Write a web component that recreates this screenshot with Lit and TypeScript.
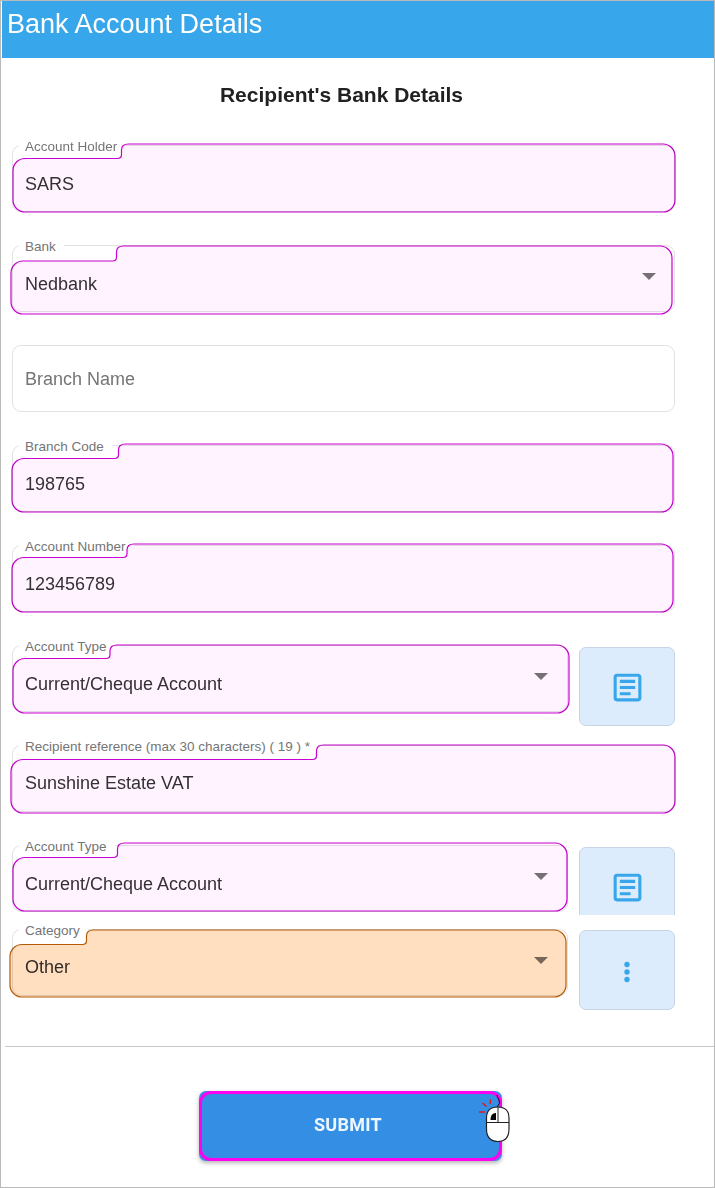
import { LitElement, html, css, svg, nothing } from "lit";
import { customElement } from "lit/decorators.js";

interface Hl { dx: number; dy: number; w: number; h: number; ny: number; nx: number; orange?: boolean }
interface Row {
  label?: string; value?: string; placeholder?: string; select?: boolean;
  height: number; action?: "doc" | "dots"; cls?: string; hl?: Hl;
}

const rows: Row[] = [
  { label: "Account Holder", value: "SARS", height: 100, hl: { dx: 1, dy: -1.5, w: 662, h: 68, ny: 14.5, nx: 108.5 } },
  { label: "Bank", value: "Nedbank", select: true, height: 100, hl: { dx: -1.5, dy: 1, w: 661, h: 68, ny: 15, nx: 105.5 } },
  { placeholder: "Branch Name", height: 100 },
  { label: "Branch Code", value: "198765", height: 100, hl: { dx: -0.5, dy: -1.5, w: 661, h: 68, ny: 14.5, nx: 106.5 } },
  { label: "Account Number", value: "123456789", height: 100, hl: { dx: -0.5, dy: -1.5, w: 661, h: 68, ny: 13.5, nx: 115 } },
  { label: "Account Type", value: "Current/Cheque Account", select: true, height: 100, action: "doc", hl: { dx: 0.5, dy: -0.5, w: 556, h: 68, ny: 13.5, nx: 97 } },
  { label: "Recipient reference (max 30 characters) ( 19 ) *", value: "Sunshine Estate VAT", height: 100, cls: "rec", hl: { dx: -1.5, dy: -0.5, w: 664, h: 68, ny: 14.5, nx: 305.5 } },
  { label: "Account Type", value: "Current/Cheque Account", select: true, height: 70, action: "doc", hl: { dx: 0.5, dy: -2.5, w: 554, h: 68, ny: 14.5, nx: 104.5 } },
  { label: "Category", value: "Other", select: true, height: 125, cls: "cat", action: "dots", hl: { dx: -2.5, dy: 0.5, w: 556, h: 67, ny: 14.5, nx: 76.5, orange: true } },
];

function notchPath(h: Hl) {
  const r = 12;
  const ox = 1, oy = 1;
  const W = ox + h.w, H = oy + h.h, ny = oy + h.ny, nx = ox + h.nx;
  return `M${ox + r} ${ny} H${nx - 4} Q${nx} ${ny} ${nx} ${ny - 4} V${oy + 6} Q${nx} ${oy} ${nx + 7} ${oy} H${W - r} A${r} ${r} 0 0 1 ${W} ${oy + r} V${H - r} A${r} ${r} 0 0 1 ${W - r} ${H} H${ox + r} A${r} ${r} 0 0 1 ${ox} ${H - r} V${ny + r} A${r} ${r} 0 0 1 ${ox + r} ${ny} Z`;
}

@customElement("app-root")
export class AppRoot extends LitElement {
  static styles = css`
    :host {
      display: block;
      box-sizing: border-box;
      width: 715px;
      height: 1188px;
      border: 1px solid #b9b9b9;
      background: #fff;
      font-family: "Liberation Sans", Arial, sans-serif;
      overflow: hidden;
    }
    .header {
      height: 57px;
      margin-left: 1px;
      background: #38a6ea;
      color: #fff;
      font-size: 27px;
      line-height: 46px;
      padding-left: 5px;
    }
    .title {
      height: 62px;
      padding-top: 25px;
      line-height: 24px;
      font-size: 21px;
      font-weight: 700;
      color: #212121;
      text-align: center;
      padding-right: 32px;
    }
    .form { padding-left: 11px; width: 663px; }
    .row { position: relative; display: flex; gap: 11px; align-items: flex-start; }
    .row.cat { background: #fff; padding-top: 14px; margin-left: -11px; padding-left: 11px; width: 674px; box-sizing: border-box; }
    .field {
      position: relative;
      flex: 1;
      box-sizing: border-box;
      height: 67px;
      border: 1px solid #e2e2e2;
      border-radius: 9px;
      padding: 12px 12px 0;
      display: flex;
      align-items: center;
      font-size: 18px;
      color: #333;
    }
    .field.empty { padding-top: 2px; color: #757575; }
    .rec .field, .cat .field { padding-top: 10px; }
    .label {
      position: absolute;
      left: 6px;
      top: -7px;
      padding: 0 8px 0 6px;
      background: #fff;
      font-size: 13.5px;
      line-height: 16px;
      color: #757575;
      white-space: nowrap;
    }
    .hl {
      position: absolute;
      mix-blend-mode: multiply;
      pointer-events: none;
    }
    .hl path { fill: #fff3ff; stroke: #c800d0; stroke-width: 1.2; }
    .hl.orange path { fill: #ffdfc0; stroke: #b65c08; }
    .arrow {
      position: absolute;
      right: 18px;
      top: 27px;
      width: 0;
      height: 0;
      border-left: 7px solid transparent;
      border-right: 7px solid transparent;
      border-top: 7px solid #757575;
    }
    .field:not(:last-child) .arrow { right: 19px; }
    .action {
      flex: none;
      box-sizing: border-box;
      width: 96px;
      height: 79px;
      margin-top: 2px;
      background: #ddecfc;
      border: 1px solid #c6d4e4;
      border-radius: 7px;
      display: flex;
      align-items: center;
      justify-content: center;
    }
    .cat .action { margin-top: 1px; height: 80px; }
    .action svg { display: block; fill: #38a6ea; }
    .action .doc { margin-top: 1px; }
    .action .dots { margin-top: 4px; }
    .divider { height: 1px; background: #c9c9c9; margin: 6px 0 0 4px; }
    .submit-wrap { padding: 44px 0 0 198px; }
    .submit {
      position: relative;
      box-sizing: border-box;
      width: 303px;
      height: 70px;
      border: none;
      border-radius: 7px;
      background: #348fe4;
      color: #eef6fe;
      font-family: Roboto, sans-serif;
      font-weight: 700;
      font-size: 18px;
      letter-spacing: 0.3px;
      padding: 0 5px 4px 0;
      display: flex;
      align-items: center;
      justify-content: center;
      box-shadow: 0 2px 4px rgba(0, 0, 0, 0.3);
    }
    .submit::after {
      content: "";
      position: absolute;
      inset: 0;
      border: 3px solid #ff00f0;
      border-radius: 12px;
    }
    .mouse { position: absolute; left: 279px; top: 1px; z-index: 1; }
  `;

  private hl(h: Hl) {
    return html`<svg
      class="hl ${h.orange ? "orange" : ""}"
      width=${h.w + 2}
      height=${h.h + 2}
      style="left:${h.dx - 2}px;top:${h.dy - 2}px"
    >${svg`<path d=${notchPath(h)}></path>`}</svg>`;
  }

  private action(kind: "doc" | "dots") {
    return html`<div class="action">
      ${kind === "doc"
        ? html`<svg class="doc" width="37" height="37" viewBox="0 0 24 24">
            <path d="M19 5v14H5V5h14m0-2H5c-1.1 0-2 .9-2 2v14c0 1.1.9 2 2 2h14c1.1 0 2-.9 2-2V5c0-1.1-.9-2-2-2z"></path>
            <path d="M14 17H7v-2h7v2zm3-4H7v-2h10v2zm0-4H7V7h10v2z"></path>
          </svg>`
        : html`<svg class="dots" width="8" height="24" viewBox="0 0 8 24">
            <circle cx="4" cy="4.5" r="2.7"></circle>
            <circle cx="4" cy="12" r="2.7"></circle>
            <circle cx="4" cy="19.5" r="2.7"></circle>
          </svg>`}
    </div>`;
  }

  render() {
    return html`
      <div class="header">Bank Account Details</div>
      <div class="title">Recipient's Bank Details</div>
      <div class="form">
        ${rows.map(
          (r) => html`<div class="row ${r.cls ?? ""}" style="height:${r.height}px">
            <div class="field ${r.value ? "" : "empty"}">
              ${r.label ? html`<span class="label">${r.label}</span>` : nothing}
              <span>${r.value ?? r.placeholder}</span>
              ${r.select ? html`<span class="arrow"></span>` : nothing}
              ${r.hl ? this.hl(r.hl) : nothing}
            </div>
            ${r.action ? this.action(r.action) : nothing}
          </div>`
        )}
      </div>
      <div class="divider"></div>
      <div class="submit-wrap">
        <div class="submit">
          SUBMIT
          <svg class="mouse" width="36" height="50" viewBox="0 0 36 50" fill="none">
            <path d="M19 15 Q23 11 21 8 Q19 5 19 3" stroke="#111" stroke-width="1"></path>
            <path d="M1 20 L7 20" stroke="#ee1111" stroke-width="1.4"></path>
            <path d="M4.5 11 L8.5 14.5" stroke="#ee1111" stroke-width="1.4"></path>
            <path d="M12.7 7.5 L12 12" stroke="#ee1111" stroke-width="1.4"></path>
            <path d="M8.5 26 C8.5 19 12 15 19.5 15 C27.5 15 31 19 31 26 L31 37 C31 45 27 49.5 19.5 49.5 C12.5 49.5 8.5 45 8.5 37 Z" fill="#fff" stroke="#222" stroke-width="1.2"></path>
            <path d="M8.5 30.5 H31 M20 15 V30.5" stroke="#222" stroke-width="1"></path>
            <path d="M18 21 C14 21 12.5 24 12.5 28 L18 28 Z" fill="#000"></path>
          </svg>
        </div>
      </div>
    `;
  }
}
